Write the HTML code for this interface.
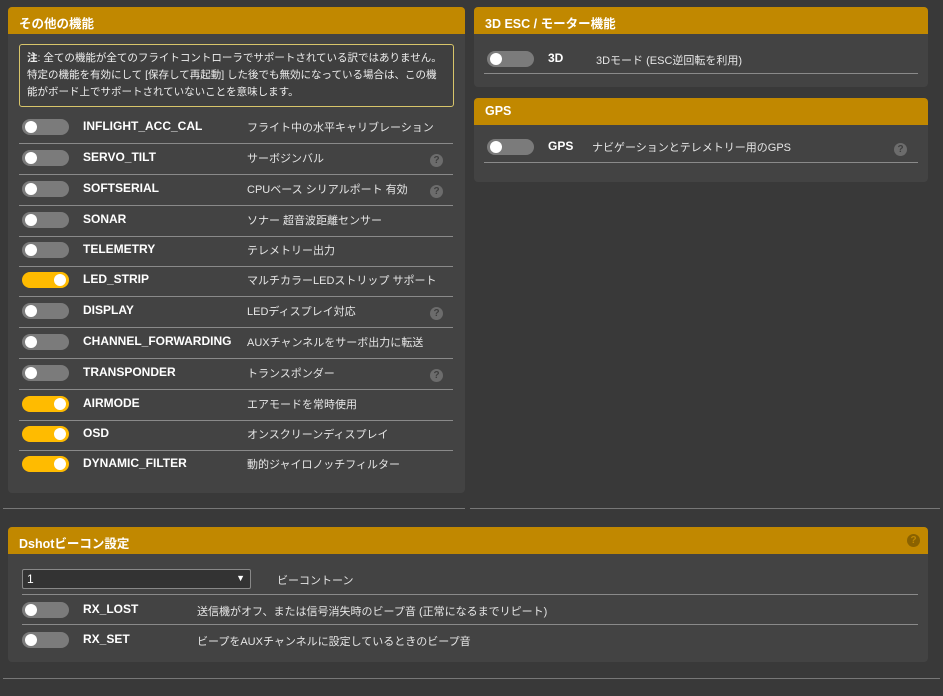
<!DOCTYPE html>
<html><head><meta charset="utf-8"><style>
*{margin:0;padding:0;box-sizing:border-box}
body{width:943px;height:696px;background:#393939;font-family:"Liberation Sans","Noto Sans CJK JP",sans-serif;color:#e6e6e6;position:relative;overflow:hidden;font-size:11px}
.p{position:absolute;background:#434343;border-radius:4px}
.h{position:absolute;left:0;right:0;top:0;height:27px;background:#c18800;border-radius:4px 4px 0 0;color:#fff;font-weight:bold;font-size:12.5px;padding:6px 0 0 11px}
.a{position:absolute;white-space:nowrap}
.t{position:absolute;width:47px;height:16px;border-radius:8px;background:#7b7b7b}
.t::after{content:"";position:absolute;left:3px;top:2px;width:12px;height:12px;border-radius:50%;background:#fff}
.t.on{background:#ffbb00}.t.on::after{left:32px}
.n{font-weight:bold;font-size:12px;color:#fff}
.l{position:absolute;height:1px;background:#8a8a8a}
.q{position:absolute;width:13px;height:13px;border-radius:50%;background:#6c6c6c;color:#3e3e3e;font-weight:bold;font-size:10px;text-align:center;line-height:13px}
</style></head><body>
<div class="p" style="left:8px;top:7px;width:457px;height:486px">
<div class="h">その他の機能</div>
<div style="position:absolute;left:11px;top:37px;width:435px;height:63px;border:1px solid #d8c56a;border-radius:3px;background:#3f3f3f;padding:5px 7px;font-size:10.5px;line-height:17px;color:#eee"><b>注</b>: 全ての機能が全てのフライトコントローラでサポートされている訳ではありません。 特定の機能を有効にして [保存して再起動] した後でも無効になっている場合は、この機能がボード上でサポートされていないことを意味します。</div>
</div>
<div id="rows"></div>
<div class="p" style="left:474px;top:7px;width:454px;height:80px"><div class="h">3D ESC / モーター機能</div></div>
<div class="t" style="left:487px;top:51px"></div><div class="a n" style="left:548px;top:51px">3D</div><div class="a" style="left:596px;top:52px">3Dモード (ESC逆回転を利用)</div><div class="l" style="left:484px;top:73px;width:434px"></div>
<div class="p" style="left:474px;top:98px;width:454px;height:84px"><div class="h">GPS</div></div>
<div class="t" style="left:487px;top:139px"></div><div class="a n" style="left:548px;top:139px">GPS</div><div class="a" style="left:592px;top:139px">ナビゲーションとテレメトリー用のGPS</div><div class="q" style="left:894px;top:143px">?</div><div class="l" style="left:484px;top:162px;width:434px"></div>
<div class="l" style="left:3px;top:508px;width:462px;background:#777"></div><div class="l" style="left:470px;top:508px;width:470px;background:#777"></div>
<div class="p" style="left:8px;top:527px;width:920px;height:135px"><div class="h">Dshotビーコン設定</div><div class="q" style="left:899px;top:7px;background:#8a6200;color:#c18800">?</div></div>
<div style="position:absolute;left:22px;top:569px;width:229px;height:20px;border:1px solid #888;border-radius:2px;background:#333;color:#fff;font-size:12px;padding:2px 4px">1<span style="position:absolute;right:5px;top:3px;font-size:9px">▼</span></div>
<div class="a" style="left:277px;top:572px">ビーコントーン</div>
<div class="l" style="left:22px;top:594px;width:896px"></div>
<div class="t" style="left:22px;top:602px"></div><div class="a n" style="left:83px;top:602px">RX_LOST</div><div class="a" style="left:197px;top:603px">送信機がオフ、または信号消失時のビープ音 (正常になるまでリピート)</div>
<div class="l" style="left:22px;top:624px;width:896px"></div>
<div class="t" style="left:22px;top:632px"></div><div class="a n" style="left:83px;top:632px">RX_SET</div><div class="a" style="left:197px;top:633px">ビープをAUXチャンネルに設定しているときのビープ音</div>
<div class="l" style="left:3px;top:678px;width:937px;background:#777"></div>
<script>
var d=[["INFLIGHT_ACC_CAL","フライト中の水平キャリブレーション",0,0],["SERVO_TILT","サーボジンバル",0,1],["SOFTSERIAL","CPUベース シリアルポート 有効",0,1],["SONAR","ソナー 超音波距離センサー",0,0],["TELEMETRY","テレメトリー出力",0,0],["LED_STRIP","マルチカラーLEDストリップ サポート",1,0],["DISPLAY","LEDディスプレイ対応",0,1],["CHANNEL_FORWARDING","AUXチャンネルをサーボ出力に転送",0,0],["TRANSPONDER","トランスポンダー",0,1],["AIRMODE","エアモードを常時使用",1,0],["OSD","オンスクリーンディスプレイ",1,0],["DYNAMIC_FILTER","動的ジャイロノッチフィルター",1,0]];
var c=[127,158,189,220,250,280,311,342,373,404,434,464],h="";
d.forEach(function(r,i){var y=c[i];h+='<div class="t'+(r[2]?' on':'')+'" style="left:22px;top:'+(y-8)+'px"></div><div class="a n" style="left:83px;top:'+(y-8)+'px">'+r[0]+'</div><div class="a" style="left:247px;top:'+(y-8)+'px">'+r[1]+'</div>';if(r[3])h+='<div class="q" style="left:430px;top:'+(y-4)+'px">?</div>';if(i<11)h+='<div class="l" style="left:19px;top:'+(y+16)+'px;width:434px"></div>';});
document.getElementById("rows").innerHTML=h;
</script>
</body></html>
